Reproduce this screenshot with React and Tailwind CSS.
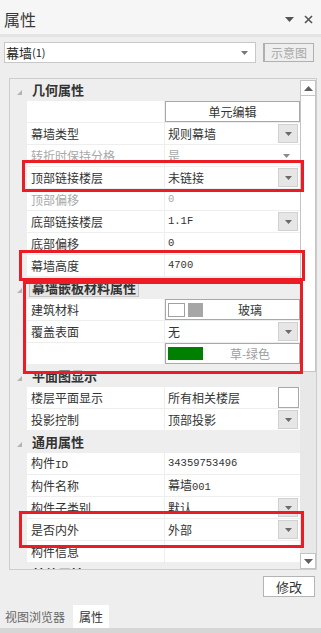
import React from "react";

const Tri = ({ c = "#6a6a6a" }) => (
  <svg width="7" height="4" viewBox="0 0 7 4"><path d="M0 0H7L3.5 4Z" fill={c} /></svg>
);

const DD = () => (
  <div className="ml-auto mr-[2px] w-[20px] h-[19px] bg-[#e6e6e6] border border-[#d0d0d0] flex items-center justify-center shrink-0">
    <Tri />
  </div>
);

const Corner = () => (
  <svg width="5" height="5" viewBox="0 0 5 5" className="ml-[7px] mt-[6px]"><path d="M5 0V5H0Z" fill="#b4b4b4" /></svg>
);

function Header({ title, focus }) {
  return (
    <div className="flex h-[21px] mb-px shrink-0">
      <div className="w-[17px] flex items-center"><Corner /></div>
      <div className="flex-1 flex items-center pl-[2px]">
        <span className={"px-[2px] text-[13px] leading-[13px] font-bold text-[#333] py-[2px] " + (focus ? "border border-[#c4c4c4] bg-[#e6e6e6]" : "border border-transparent")}>
          {title}
        </span>
      </div>
    </div>
  );
}

function Row({ label, children, disabled }) {
  return (
    <div className="flex h-[21px] mb-px shrink-0">
      <div className="w-[17px]" />
      <div className={"w-[137px] bg-white flex items-center pl-[4px] text-[12px] " + (disabled ? "text-[#a8a8a8]" : "text-[#333]")}>
        {label}
      </div>
      <div className={"w-[135px] ml-px bg-white flex items-center text-[12px] " + (disabled ? "text-[#a8a8a8]" : "text-[#333]")}>
        {children}
      </div>
    </div>
  );
}

const V = ({ children, mono }) => (
  <span className={"pl-[3px] " + (mono ? "font-['Liberation_Mono',monospace] text-[10.5px]" : "")}>{children}</span>
);

export default function App() {
  return (
    <div className="relative w-[321px] h-[633px] bg-[#eeeeee] flex flex-col overflow-hidden font-['Noto_Sans_CJK_SC',sans-serif] leading-none">
      {/* title */}
      <div className="h-[34px] bg-[#f6f6f6] flex items-center pt-[4px] px-[4px] shrink-0">
        <span className="text-[16px] text-[#3a3a3a]">属性</span>
        <div className="ml-auto flex items-center gap-[10px] pr-[4px]">
          <svg width="9" height="5" viewBox="0 0 9 5"><path d="M0 0H9L4.5 5Z" fill="#555" /></svg>
          <svg width="9" height="9" viewBox="0 0 9 9"><path d="M1 1L8 8M8 1L1 8" stroke="#555" strokeWidth="1.6" /></svg>
        </div>
      </div>
      <div className="h-[3px] bg-[#e4e4e4] shrink-0" />

      {/* selector row */}
      <div className="flex items-center mt-[5px] pl-[4px] h-[21px] shrink-0">
        <div className="w-[252px] h-[21px] bg-white border border-[#c8c8c8] flex items-center pl-[1px]">
          <span className="text-[13px] text-[#222]">幕墙</span>
          <span className="text-[11px] text-[#222]">(1)</span>
          <div className="ml-auto mr-[7px]"><Tri c="#777" /></div>
        </div>
        <div className="ml-[7px] w-[51px] h-[19px] border border-[#b0b0b0] border-l-2 flex items-center justify-center text-[12px] text-[#a8a8a8]">
          示意图
        </div>
      </div>

      {/* property panel */}
      <div className="mt-[15px] ml-[9px] w-[308px] h-[492px] border border-[#cdcdcd] flex shrink-0">
        <div className="w-[290px] h-full overflow-hidden flex flex-col">
          <Header title="几何属性" />
          <Row label="">
            <div className="w-full h-full border border-[#a8a8a8] flex items-center justify-center">单元编辑</div>
          </Row>
          <Row label="幕墙类型"><V>规则幕墙</V><DD /></Row>
          <Row label="转折时保持分格" disabled>
            <V>是</V>
            <div className="ml-auto mr-[10px]"><Tri c="#8a8a8a" /></div>
          </Row>
          <Row label="顶部链接楼层"><V>未链接</V><DD /></Row>
          <Row label="顶部偏移" disabled><V mono>0</V></Row>
          <Row label="底部链接楼层"><V mono>1.1F</V><DD /></Row>
          <Row label="底部偏移"><V mono>0</V></Row>
          <Row label="幕墙高度"><V mono>4700</V></Row>
          <Header title="幕墙嵌板材料属性" focus />
          <Row label="建筑材料">
            <div className="w-full h-full border border-[#a8a8a8] flex items-center pl-[2px]">
              <div className="w-[17px] h-[14px] bg-white border border-[#a0a0a0]" />
              <div className="w-[15px] h-[14px] bg-[#a6a6a6] ml-[3px]" />
              <span className="flex-1 text-center pr-[2px]">玻璃</span>
            </div>
          </Row>
          <Row label="覆盖表面"><V>无</V><DD /></Row>
          <Row label="">
            <div className="w-full h-full border border-[#a8a8a8] flex items-center pl-[2px]">
              <div className="w-[35px] h-[13px] bg-[#008000]" />
              <span className="flex-1 text-center text-[#a0a0a0] pr-[2px]">草-绿色</span>
            </div>
          </Row>
          <Header title="平面图显示" />
          <Row label="楼层平面显示">
            <V>所有相关楼层</V>
            <div className="ml-auto mr-[1px] w-[21px] h-[21px] bg-white border border-[#a8a8a8]" />
          </Row>
          <Row label="投影控制"><V>顶部投影</V><DD /></Row>
          <Header title="通用属性" />
          <Row label={<span>构件<span className="font-['Liberation_Mono',monospace] text-[11px]">ID</span></span>}><V mono>34359753496</V></Row>
          <Row label="构件名称"><V>幕墙<span className="font-['Liberation_Mono',monospace] text-[10.5px]">001</span></V></Row>
          <Row label="构件子类别"><V>默认</V><DD /></Row>
          <Row label="是否内外"><V>外部</V><DD /></Row>
          <Row label="构件信息"><V></V></Row>
          <Header title="其他属性" />
        </div>
        {/* scrollbar */}
        <div className="w-[16px] h-full flex flex-col">
          <div className="h-[16px] mt-px bg-white border border-[#c4c4c4] flex items-center justify-center shrink-0">
            <svg width="9" height="5" viewBox="0 0 9 5"><path d="M0 5H9L4.5 0Z" fill="#606060" /></svg>
          </div>
          <div className="h-[276px] bg-white border border-[#c4c4c4] border-t-0 shrink-0" />
          <div className="flex-1 bg-[#e8e8e8]" />
          <div className="h-[16px] bg-white border border-[#c4c4c4] flex items-center justify-center shrink-0">
            <svg width="9" height="5" viewBox="0 0 9 5"><path d="M0 0H9L4.5 5Z" fill="#606060" /></svg>
          </div>
        </div>
      </div>

      {/* modify button */}
      <div className="flex mt-[6px] h-[21px] shrink-0">
        <div className="ml-auto mr-[6px] w-[52px] h-[21px] bg-white border border-[#b4b4b4] flex items-center justify-center text-[13px] text-[#333]">
          修改
        </div>
      </div>

      {/* tabs */}
      <div className="flex items-stretch mt-[8px] h-[23px] shrink-0">
        <div className="pl-[5px] pr-[8px] flex items-center text-[12px] text-[#666]">视图浏览器</div>
        <div className="w-[36px] bg-white flex items-center justify-center text-[12px] text-[#333]">属性</div>
      </div>
      <div className="flex-1 bg-[#d6d6d6]" />

      {/* red annotation boxes */}
      <div className="absolute left-[22px] top-[160px] w-[282px] h-[32px] border-[3px] border-[#ec1c24]" />
      <div className="absolute left-[19px] top-[250px] w-[286px] h-[31px] border-[3px] border-[#ec1c24]" />
      <div className="absolute left-[23px] top-[281px] w-[280px] h-[93px] border-[3px] border-[#ec1c24]" />
      <div className="absolute left-[19px] top-[511px] w-[285px] h-[37px] border-[3px] border-[#ec1c24]" />
    </div>
  );
}
